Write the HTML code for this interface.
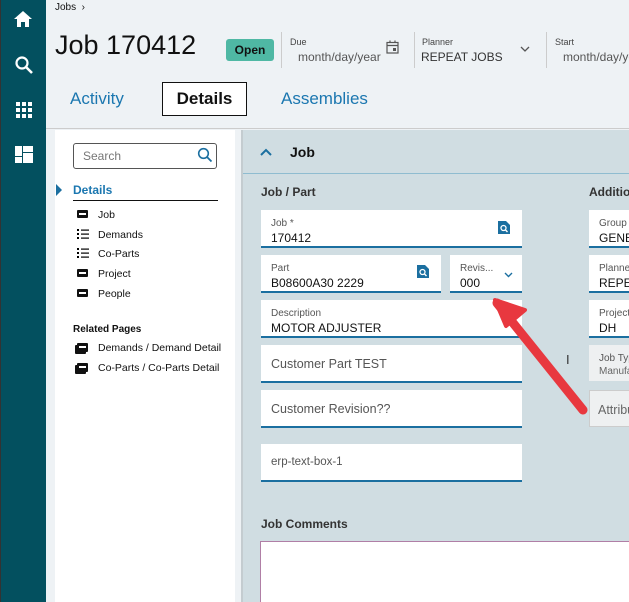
<!DOCTYPE html>
<html><head><style>
*{margin:0;padding:0;box-sizing:border-box}
html,body{width:629px;height:602px;overflow:hidden}
body{background:#eef2f5;font-family:"Liberation Sans",sans-serif;position:relative;color:#111}
.a{position:absolute}
.fld{position:absolute;background:#fff;border-bottom:2px solid #1b6fa0;overflow:hidden;white-space:nowrap}
.lbl{position:absolute;left:10px;top:8px;font-size:10px;color:#555;white-space:nowrap}
.val{position:absolute;left:10px;top:21px;font-size:12px;color:#111;white-space:nowrap}
.ph{position:absolute;left:10px;top:12px;font-size:12.5px;color:#555;white-space:nowrap}
.nav{position:absolute;left:98px;font-size:10.5px;color:#111}
.ic{position:absolute;left:77px;width:11px;height:8px;background:#111;border-radius:1px}
.ic:after{content:"";position:absolute;left:2px;top:3px;width:7px;height:2px;background:#fff}
</style></head><body>
<div class="a" style="left:0;top:0;width:46px;height:602px;background:#03505f;border-left:1px solid #333"></div>
<svg class="a" style="left:13px;top:10px" width="20" height="18" viewBox="0 0 20 18"><path d="M10 1 L19 9 H16 V17 H12 V12 H8 V17 H4 V9 H1 Z" fill="#fff"/></svg>
<svg class="a" style="left:14px;top:55px" width="20" height="20" viewBox="0 0 20 20"><circle cx="8" cy="8" r="5.5" stroke="#fff" stroke-width="2.2" fill="none"/><path d="M12 12 L18 18" stroke="#fff" stroke-width="2.6"/></svg>
<svg class="a" style="left:16px;top:102px" width="16" height="16" viewBox="0 0 16 16" fill="#fff"><rect x="0" y="0" width="4" height="4"/><rect x="6" y="0" width="4" height="4"/><rect x="12" y="0" width="4" height="4"/><rect x="0" y="6" width="4" height="4"/><rect x="6" y="6" width="4" height="4"/><rect x="12" y="6" width="4" height="4"/><rect x="0" y="12" width="4" height="4"/><rect x="6" y="12" width="4" height="4"/><rect x="12" y="12" width="4" height="4"/></svg>
<svg class="a" style="left:15px;top:146px" width="18" height="17" viewBox="0 0 18 17" fill="#fff"><rect x="0" y="0" width="7" height="10"/><rect x="0" y="11" width="7" height="6"/><rect x="8" y="0" width="10" height="6"/><rect x="8" y="7" width="10" height="10"/></svg>

<div class="a" style="left:55px;top:2px;font-size:10px">Jobs &nbsp;›</div>
<div class="a" style="left:55px;top:30px;font-size:27px">Job 170412</div>
<div class="a" style="left:226px;top:39px;width:48px;height:22px;background:#4fb8a4;border-radius:3px;font-size:12px;font-weight:bold;text-align:center;line-height:22px">Open</div>
<div class="a" style="left:281px;top:32px;width:1px;height:36px;background:#ccc"></div>
<div class="a" style="left:290px;top:37px;font-size:9px;color:#444">Due</div>
<div class="a" style="left:298px;top:50px;font-size:12px;color:#555">month/day/year</div>
<svg class="a" style="left:386px;top:40px" width="13" height="14" viewBox="0 0 13 14"><rect x="1" y="2.5" width="11" height="10.5" fill="none" stroke="#555" stroke-width="1.2"/><path d="M1 5.5H12M4 0.5V3M9 0.5V3" stroke="#555" stroke-width="1.2"/><rect x="7" y="8" width="3" height="3" fill="#555"/></svg>
<div class="a" style="left:414px;top:32px;width:1px;height:36px;background:#ccc"></div>
<div class="a" style="left:422px;top:37px;font-size:9px;color:#444">Planner</div>
<div class="a" style="left:421px;top:50px;font-size:12px;color:#333">REPEAT JOBS</div>
<svg class="a" style="left:520px;top:46px" width="10" height="6"><path d="M1 1 L5 5 L9 1" stroke="#555" stroke-width="1.3" fill="none"/></svg>
<div class="a" style="left:546px;top:32px;width:1px;height:36px;background:#ccc"></div>
<div class="a" style="left:555px;top:37px;font-size:9px;color:#444">Start</div>
<div class="a" style="left:563px;top:50px;font-size:12px;color:#555">month/day/year</div>

<div class="a" style="left:70px;top:89px;font-size:17px;color:#1b77b0">Activity</div>
<div class="a" style="left:162px;top:82px;width:85px;height:34px;border:1px solid #111;background:#fff;font-size:17px;font-weight:bold;text-align:center;line-height:32px">Details</div>
<div class="a" style="left:281px;top:89px;font-size:17px;color:#1b77b0">Assemblies</div>
<div class="a" style="left:46px;top:128px;width:583px;height:1px;background:#ccc"></div>

<div class="a" style="left:55px;top:130px;width:180px;height:472px;background:#fff"></div>
<div class="a" style="left:73px;top:143px;width:144px;height:26px;border:1px solid #555;border-radius:3px;background:#fff"></div>
<div class="a" style="left:83px;top:149px;font-size:12px;color:#777">Search</div>
<svg class="a" style="left:197px;top:147px" width="16" height="16" viewBox="0 0 16 16"><circle cx="6.5" cy="6.5" r="4.8" stroke="#1b6fa0" stroke-width="1.6" fill="none"/><path d="M10 10 L14.5 14.5" stroke="#1b6fa0" stroke-width="1.8"/></svg>
<svg class="a" style="left:56px;top:184px" width="7" height="12"><path d="M0 0 L6 6 L0 12Z" fill="#1b6fa0"/></svg>
<div class="a" style="left:73px;top:183px;font-size:12px;font-weight:bold;color:#1b77b0">Details</div>
<div class="a" style="left:73px;top:200px;width:145px;height:1px;background:#111"></div>
<div class="ic" style="top:210px"></div><div class="nav" style="top:209px">Job</div>
<svg class="a" style="left:77px;top:229px" width="12" height="10"><rect x="0" y="0" width="2" height="2"/><rect x="0" y="4" width="2" height="2"/><rect x="0" y="8" width="2" height="2"/><rect x="4" y="0.5" width="8" height="1.2"/><rect x="4" y="4.5" width="8" height="1.2"/><rect x="4" y="8.5" width="8" height="1.2"/></svg><div class="nav" style="top:229px">Demands</div>
<svg class="a" style="left:77px;top:248px" width="12" height="10"><rect x="0" y="0" width="2" height="2"/><rect x="0" y="4" width="2" height="2"/><rect x="0" y="8" width="2" height="2"/><rect x="4" y="0.5" width="8" height="1.2"/><rect x="4" y="4.5" width="8" height="1.2"/><rect x="4" y="8.5" width="8" height="1.2"/></svg><div class="nav" style="top:248px">Co-Parts</div>
<div class="ic" style="top:269px"></div><div class="nav" style="top:268px">Project</div>
<div class="ic" style="top:289px"></div><div class="nav" style="top:288px">People</div>
<div class="a" style="left:73px;top:324px;font-size:10px;font-weight:bold">Related Pages</div>
<div class="ic" style="top:343px;height:9px;box-shadow:-2px 2px 0 #111"></div><div class="nav" style="top:342px">Demands / Demand Detail</div>
<div class="ic" style="top:363px;height:9px;box-shadow:-2px 2px 0 #111"></div><div class="nav" style="top:362px">Co-Parts / Co-Parts Detail</div>

<div class="a" style="left:241px;top:130px;width:388px;height:472px;background:#d0dde2;border-left:2px solid #c4ccd0"></div>
<svg class="a" style="left:260px;top:148px" width="12" height="8"><path d="M1 7 L6 2 L11 7" stroke="#1b6fa0" stroke-width="2" fill="none"/></svg>
<div class="a" style="left:290px;top:144px;font-size:14px;font-weight:bold">Job</div>
<div class="a" style="left:243px;top:173px;width:386px;height:1px;background:#8fbcd0"></div>
<div class="a" style="left:261px;top:185px;font-size:12px;font-weight:bold;color:#333">Job / Part</div>
<div class="a" style="left:589px;top:185px;font-size:12px;font-weight:bold;color:#333">Addition</div>

<div class="fld" style="left:261px;top:210px;width:261px;height:38px"><div class="lbl">Job *</div><div class="val">170412</div></div>
<div class="fld" style="left:261px;top:255px;width:180px;height:38px"><div class="lbl">Part</div><div class="val">B08600A30 2229</div></div>
<div class="fld" style="left:450px;top:255px;width:72px;height:38px"><div class="lbl">Revis...</div><div class="val">000</div></div>
<svg class="a" style="left:504px;top:272px" width="9" height="6"><path d="M1 1 L4.5 4.5 L8 1" stroke="#1b6fa0" stroke-width="1.4" fill="none"/></svg>
<svg class="a" style="left:498px;top:221px" width="12" height="13" viewBox="0 0 12 13"><path d="M0 0H8L12 4V13H0Z" fill="#1b6fa0"/><circle cx="5.5" cy="7" r="2.5" stroke="#fff" stroke-width="1.3" fill="none"/><path d="M7.3 8.8L9.5 11" stroke="#fff" stroke-width="1.4"/></svg>
<svg class="a" style="left:417px;top:265px" width="12" height="13" viewBox="0 0 12 13"><path d="M0 0H8L12 4V13H0Z" fill="#1b6fa0"/><circle cx="5.5" cy="7" r="2.5" stroke="#fff" stroke-width="1.3" fill="none"/><path d="M7.3 8.8L9.5 11" stroke="#fff" stroke-width="1.4"/></svg>
<div class="fld" style="left:261px;top:300px;width:261px;height:38px"><div class="lbl">Description</div><div class="val">MOTOR ADJUSTER</div></div>
<div class="fld" style="left:261px;top:345px;width:261px;height:38px"><div class="ph">Customer Part TEST</div></div>
<div class="fld" style="left:261px;top:390px;width:261px;height:38px"><div class="ph">Customer Revision??</div></div>
<div class="fld" style="left:261px;top:444px;width:261px;height:38px"><div class="ph" style="font-size:11.5px">erp-text-box-1</div></div>

<div class="fld" style="left:589px;top:210px;width:50px;height:38px"><div class="lbl">Group</div><div class="val">GENERAL</div></div>
<div class="fld" style="left:589px;top:255px;width:50px;height:38px"><div class="lbl">Planner</div><div class="val">REPEAT</div></div>
<div class="fld" style="left:589px;top:300px;width:50px;height:38px"><div class="lbl">Project</div><div class="val">DH</div></div>
<div class="a" style="left:589px;top:345px;width:50px;height:36px;background:#eef0f1;overflow:hidden"><div class="lbl">Job Type</div><div class="val" style="font-size:10px;color:#666">Manufa</div></div>
<div class="a" style="left:589px;top:390px;width:50px;height:37px;background:#eef0f1;border:1px solid #ccc;overflow:hidden"><div class="ph" style="left:8px;color:#666">Attribu</div></div>
<div class="a" style="left:566px;top:352px;font-size:13px;color:#333">I</div>

<div class="a" style="left:261px;top:517px;font-size:12px;font-weight:bold;color:#333">Job Comments</div>
<div class="a" style="left:260px;top:541px;width:380px;height:61px;background:#fff;border:1px solid #b07fa6;border-bottom:none"></div>

<svg class="a" style="left:480px;top:290px" width="120" height="140" viewBox="0 0 120 140"><path d="M17 13 L103 120" stroke="#e8383f" stroke-width="9" stroke-linecap="round"/><path d="M15 10 L45 20 L26 36 Z" fill="#e8383f" stroke="#e8383f" stroke-width="4" stroke-linejoin="round"/></svg>
</body></html>
